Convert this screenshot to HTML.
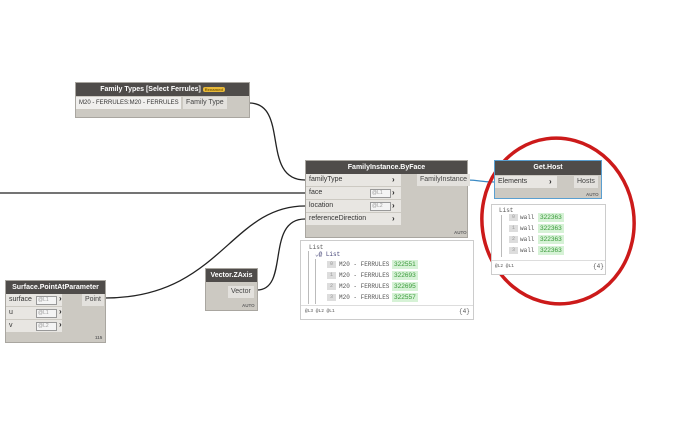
<!DOCTYPE html><html><head><style>
body{margin:0;width:690px;height:425px;background:#fff;position:relative;overflow:hidden;font-family:"Liberation Sans",sans-serif;}
*{white-space:nowrap}
.n{position:absolute;background:#ccc9c2;border:1px solid #a9a6a0;box-sizing:border-box}
.h{background:#4f4c4a;color:#fff;font-weight:bold;font-size:7px;text-align:center;height:13px;line-height:13px;overflow:hidden}
.r{position:absolute;background:#e8e6e2;font-size:7px;color:#333;height:12px;line-height:12px;padding-left:3px;box-sizing:border-box}
.o{position:absolute;background:#e3e1dd;font-size:7px;color:#444;height:12px;line-height:12px;padding:0 3px;box-sizing:border-box}
.ch{position:absolute;font-size:8px;font-weight:bold;color:#222}
.in{position:absolute;width:18px;height:7px;border:1px solid #999;background:#f4f4f4;font-size:5px;color:#999;line-height:7px;padding-left:1px}
.auto{position:absolute;font-size:4.5px;color:#666;font-weight:bold}
.p{position:absolute;border:1px solid #ccc;background:#fff;font-family:"Liberation Mono",monospace;font-size:6px;color:#555}
.g{position:absolute;background:#d6f2d6;color:#3a9a3a;padding:0 2px;line-height:9px;font-family:"Liberation Sans",sans-serif;font-size:6.5px}
.ix{position:absolute;background:#ddd;color:#999;width:9px;height:7px;font-size:5px;line-height:7px;text-align:center}
.t{position:absolute;line-height:9px}
</style></head><body>
<svg width="690" height="425" style="position:absolute;left:0;top:0" >
<g fill="none" stroke="#222" stroke-width="1.3">
<path d="M249,103 C290,103 260,180 305,180"/>
<path d="M0,193 L305,193"/>
<path d="M105,298 C220,298 230,206 305,206"/>
<path d="M257,290 C290,290 265,219 305,219"/>
</g>
<path d="M467,180 C480,180 480,182 494,182" stroke="#3a8ac4" stroke-width="1.3" fill="none"/>
<ellipse cx="558" cy="221" rx="76" ry="83" fill="none" stroke="#cc1a1a" stroke-width="3.5" transform="rotate(-8 558 221)"/>
</svg>

<div class="n" style="left:75px;top:82px;width:175px;height:36px"><div class="h">Family Types [Select Ferrules] <span style="background:#e8b93a;color:#7a5a00;font-size:4px;padding:0 2px;border-radius:2px">Renamed</span></div>
<div class="r" style="left:0;top:14px;width:105px;background:#f0efed;font-size:6px;overflow:hidden">M20 - FERRULES:M20 - FERRULES <span style="color:#999">⌄</span></div>
<div class="o" style="left:107px;top:14px">Family Type</div></div>

<div class="n" style="left:305px;top:160px;width:163px;height:78px"><div class="h">FamilyInstance.ByFace</div>
<div class="r" style="left:0;top:13px;width:95px">familyType</div>
<div class="r" style="left:0;top:26px;width:95px">face</div>
<div class="r" style="left:0;top:39px;width:95px">location</div>
<div class="r" style="left:0;top:52px;width:95px">referenceDirection</div>
<div class="ch" style="left:86px;top:14px">›</div><div class="ch" style="left:86px;top:27px">›</div><div class="ch" style="left:86px;top:40px">›</div><div class="ch" style="left:86px;top:53px">›</div>
<div class="in" style="left:64px;top:28px">@L1</div><div class="in" style="left:64px;top:41px">@L2</div>
<div class="o" style="left:111px;top:13px">FamilyInstance</div>
<div class="auto" style="left:148px;top:69px">AUTO</div></div>

<div class="p" style="left:300px;top:240px;width:172px;height:78px">
<div class="t" style="left:8px;top:2px">List</div><div class="t" style="left:14px;top:9px;color:#447">⌄@ List</div>
<div style="position:absolute;left:7px;top:10px;height:53px;border-left:1px solid #bbb"></div>
<div style="position:absolute;left:14px;top:18px;height:45px;border-left:1px solid #bbb"></div>
<div class="ix" style="left:26px;top:20px">0</div><div class="t" style="left:38px;top:19px">M20 - FERRULES</div><div class="g" style="left:91px;top:19px">322551</div>
<div class="ix" style="left:26px;top:31px">1</div><div class="t" style="left:38px;top:30px">M20 - FERRULES</div><div class="g" style="left:91px;top:30px">322693</div>
<div class="ix" style="left:26px;top:42px">2</div><div class="t" style="left:38px;top:41px">M20 - FERRULES</div><div class="g" style="left:91px;top:41px">322695</div>
<div class="ix" style="left:26px;top:53px">3</div><div class="t" style="left:38px;top:52px">M20 - FERRULES</div><div class="g" style="left:91px;top:52px">322557</div>
<div style="position:absolute;left:0;top:64px;width:172px;border-top:1px solid #ddd"></div>
<div class="t" style="left:4px;top:66px;font-size:4.5px">@L3 @L2 @L1</div><div class="t" style="left:158px;top:66px">{4}</div></div>

<div class="n" style="left:494px;top:160px;width:108px;height:39px;border:1px solid #5a9fd0"><div class="h" style="height:14px;line-height:14px">Get.Host</div>
<div class="r" style="left:0;top:15px;width:62px">Elements</div><div class="ch" style="left:54px;top:16px">›</div>
<div class="o" style="left:79px;top:15px">Hosts</div><div class="auto" style="left:91px;top:31px">AUTO</div></div>

<div class="p" style="left:491px;top:204px;width:113px;height:69px">
<div class="t" style="left:7px;top:1px">List</div>
<div style="position:absolute;left:9px;top:10px;height:42px;border-left:1px solid #bbb"></div>
<div class="ix" style="left:17px;top:9px">0</div><div class="t" style="left:28px;top:8px">wall</div><div class="g" style="left:46px;top:8px">322363</div>
<div class="ix" style="left:17px;top:20px">1</div><div class="t" style="left:28px;top:19px">wall</div><div class="g" style="left:46px;top:19px">322363</div>
<div class="ix" style="left:17px;top:31px">2</div><div class="t" style="left:28px;top:30px">wall</div><div class="g" style="left:46px;top:30px">322363</div>
<div class="ix" style="left:17px;top:42px">3</div><div class="t" style="left:28px;top:41px">wall</div><div class="g" style="left:46px;top:41px">322363</div>
<div style="position:absolute;left:0;top:55px;width:113px;border-top:1px solid #ddd"></div>
<div class="t" style="left:3px;top:57px;font-size:4.5px">@L2 @L1</div><div class="t" style="left:101px;top:57px">{4}</div></div>

<div class="n" style="left:5px;top:280px;width:101px;height:63px"><div class="h">Surface.PointAtParameter</div>
<div class="r" style="left:0;top:13px;width:56px">surface</div>
<div class="r" style="left:0;top:26px;width:56px">u</div>
<div class="r" style="left:0;top:39px;width:56px">v</div>
<div class="in" style="left:30px;top:15px">@L1</div><div class="in" style="left:30px;top:28px">@L1</div><div class="in" style="left:30px;top:41px">@L2</div>
<div class="ch" style="left:53px;top:13px">›</div><div class="ch" style="left:53px;top:26px">›</div><div class="ch" style="left:53px;top:39px">›</div>
<div class="o" style="left:76px;top:13px">Point</div><div class="auto" style="left:89px;top:54px">115</div></div>

<div class="n" style="left:205px;top:268px;width:53px;height:43px"><div class="h">Vector.ZAxis</div>
<div class="o" style="left:22px;top:17px">Vector</div><div class="auto" style="left:36px;top:34px">AUTO</div></div>
</body></html>
